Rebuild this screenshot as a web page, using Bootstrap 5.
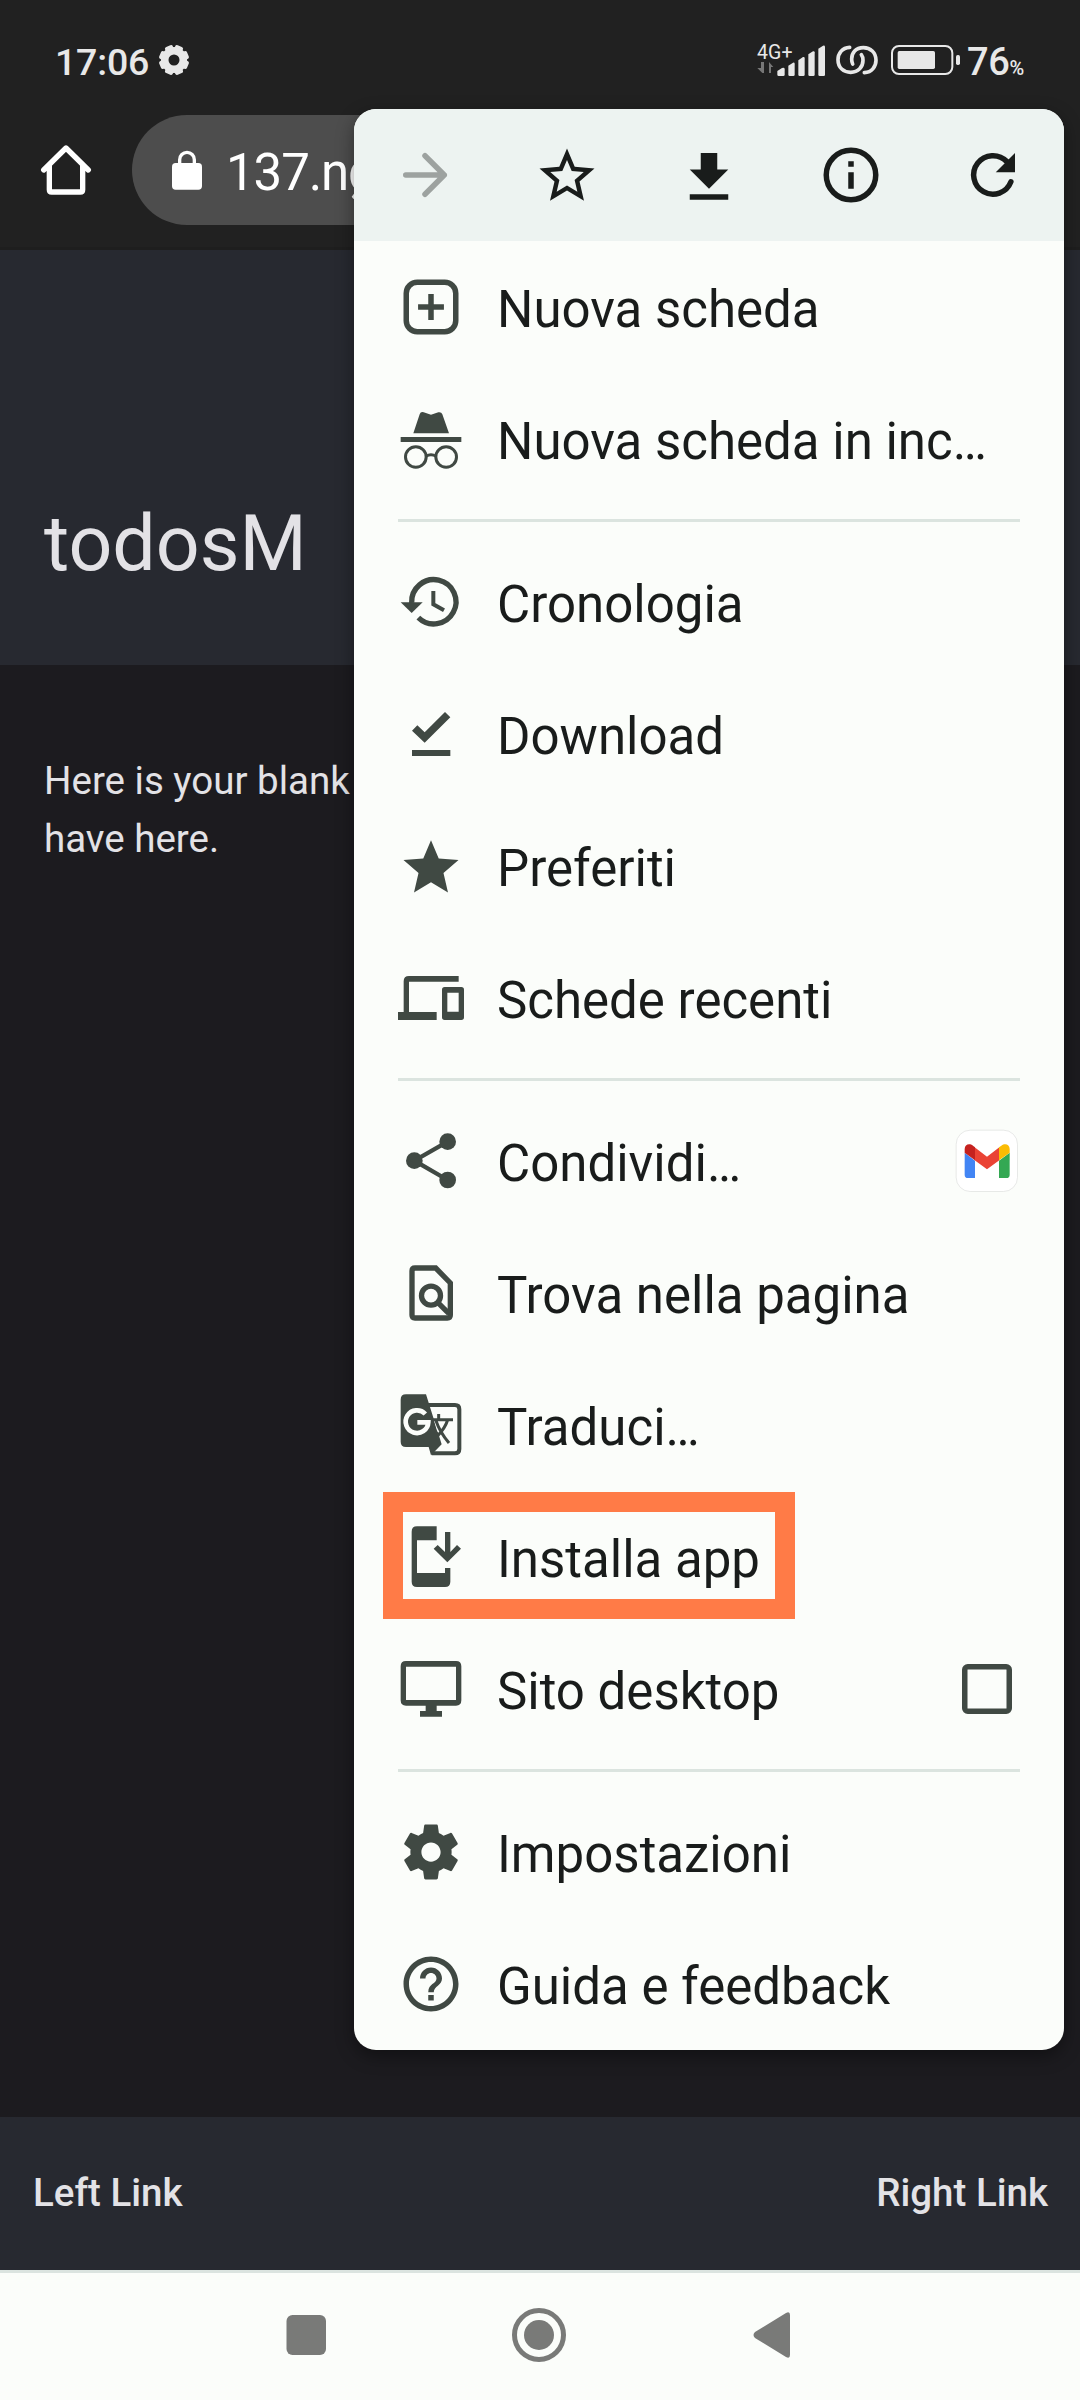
<!DOCTYPE html>
<html lang="it">
<head>
<meta charset="utf-8">
<meta name="viewport" content="width=device-width, initial-scale=1">
<title>todosM</title>
<link rel="stylesheet" href="https://cdn.jsdelivr.net/npm/bootstrap@5.3.0/dist/css/bootstrap.min.css">
<style>
body{font-family:Roboto,"Liberation Sans",sans-serif;background:#1c1b1f;color:#e3e2e6;width:1080px;height:2400px;overflow:hidden}
svg{display:block;flex:none}
.status-bar{height:109px;background:#212121;color:#e8e8e8;padding:0 56px 0 55px}
.clock{font-size:37.5px;font-weight:500;line-height:44px;letter-spacing:-.2px;margin-top:40px}
.status-gear{margin:45px 0 0 10px}
.net{width:37px;margin-top:43px}
.net-type{font-size:19.5px;line-height:19px;letter-spacing:.1px;white-space:nowrap}
.status-icons{margin:43px 0 0 -24px}
.pct{font-size:38px;font-weight:500;line-height:44px;margin:40px 0 0 7px;letter-spacing:-.3px}
.pct span{font-size:20px}
.url-bar{height:141px;background:#212121;border-bottom:3px solid #1e1e1e;padding:6px 0 0 33px}
.pill{height:110px;width:900px;border-radius:55px;background:#4d4d4d;margin-left:33px;padding-left:40px;color:#fff}
.url-text{font-size:51px;letter-spacing:-1.1px;margin-left:24px;line-height:60px;margin-top:6px}
.hero{height:415px;background:#272930;padding:248px 44px 0}
.hero h1{font-size:77px;line-height:92px;font-weight:400;margin:0}
.page-body{height:1452px;padding:87px 44px 0}
.page-body p{font-size:38.5px;line-height:58px;margin:0}
.page-foot{height:153px;background:#272930;padding:0 32px 2px 33px}
.page-foot a{color:#e3e2e6;font-size:38.5px;font-weight:500;text-decoration:none}
.sys-nav{height:130px;background:#fbfdfa;border-top:3px solid #dbe4e0}
.menu-sheet{left:354px;top:109px;width:710px;height:1941px;border-radius:22px;background:#fbfdfa;color:#191c1b;box-shadow:0 6px 18px rgba(0,0,0,.4)}
.menu-head{height:132px;background:#edf3f1;border-radius:22px 22px 0 0}
.menu-head div{width:142px}
.menu-row{height:132px;padding:0 44px}
.menu-row>svg{color:#404943}
.menu-label{font-size:51px;line-height:60px;margin:6px 0 0 33px;white-space:nowrap;flex:1 1 0}
.rule{height:3px;margin:14px 44px;background:#dbe4df}
.mark-box{left:29px;top:1px;width:412px;height:127px;border:20px solid #ff7b47}
</style>
<script src="https://cdn.jsdelivr.net/npm/bootstrap@5.3.0/dist/js/bootstrap.bundle.min.js"></script>
</head>
<body class="position-relative">
<header>
  <div class="status-bar d-flex justify-content-between align-items-start">
    <div class="d-flex align-items-start">
      <span class="clock">17:06</span>
      <svg class="status-gear" width="30" height="30" viewBox="-15 -15 30 30"><circle r="9.300" fill="none" stroke="#e8e8e8" stroke-width="7.600"/><g fill="#e8e8e8"><rect id="tooth" x="-4.200" y="-15" width="8.400" height="6" rx="2" transform="rotate(22.5)"/><use href="#tooth" transform="rotate(45)"/><use href="#tooth" transform="rotate(90)"/><use href="#tooth" transform="rotate(135)"/><use href="#tooth" transform="rotate(180)"/><use href="#tooth" transform="rotate(225)"/><use href="#tooth" transform="rotate(270)"/><use href="#tooth" transform="rotate(315)"/></g></svg>
    </div>
    <div class="d-flex align-items-start">
      <div class="net"><div class="net-type">4G+</div>
        <svg width="18" height="12" viewBox="114 192 54 36" fill="#777"><path d="M126 192h9v33h-5l-15-15h11zM142 225h8v-33l13 15h-7v18z"/></svg>
      </div>
      <svg class="status-icons" width="190" height="36" viewBox="150 129 570 108">
        <g fill="#e8e8e8"><path d="M172 213l14-9q8-2 8 3v17q0 4-4 4h-14q-4 0-4-4z"/><path d="M205 197l14-9q5-1 5 3v33q0 4-4 4h-11q-4 0-4-4z"/><path d="M235 181l14-10q5-1 5 3v50q0 4-4 4h-11q-4 0-4-4z"/><path d="M265 163l14-9q5-1 5 3v67q0 4-4 4h-11q-4 0-4-4z"/><path d="M295 146l14-9q6-1 6 3v84q0 4-4 4h-12q-4 0-4-4z"/></g>
        <g fill="none" stroke="#e8e8e8" stroke-width="11" stroke-linecap="round"><path d="M389 142c-23 1-35 19-35 37 0 24 17 38 38 38 23 0 37-16 37-36 0-8-2-13-5-17"/><path d="M433 218c23-1 35-19 35-37 0-24-17-38-38-38-23 0-35 16-35 34 0 7 1 11 3 15"/></g>
        <rect x="516" y="138" width="181" height="84" rx="21" fill="none" stroke="#e8e8e8" stroke-width="6"/><rect x="533" y="153" width="112" height="54" rx="5" fill="#e8e8e8"/><rect x="708" y="165" width="12" height="30" rx="5" fill="#e8e8e8"/>
      </svg>
      <span class="pct">76<span>%</span></span>
    </div>
  </div>
  <div class="url-bar d-flex">
    <svg width="66" height="110" viewBox="99 345 198 330" fill="none" stroke="#fff" stroke-width="16" stroke-linejoin="round" stroke-linecap="round"><path d="M131 510l67-66 67 66M148 497v72q0 7 7 7h86q7 0 7-7v-72"/></svg>
    <div class="pill d-flex align-items-center">
      <svg width="30" height="40" viewBox="516 448 90 120"><rect x="516" y="487" width="90" height="80" rx="11" fill="#fff"/><path d="M539 490v-13a22 22 0 0 1 44 0v13" fill="none" stroke="#fff" stroke-width="10"/></svg>
      <span class="url-text">137.ng</span>
    </div>
  </div>
</header>
<main>
  <section class="hero"><h1>todosM</h1></section>
  <section class="page-body"><p>Here is your blank<br>have here.</p></section>
</main>
<footer class="page-foot d-flex justify-content-between align-items-center"><a href="#">Left Link</a><a href="#">Right Link</a></footer>
<div class="sys-nav d-flex">
  <svg width="1080" height="124" viewBox="0 2273 1080 124" fill="#797a78"><rect x="286.500" y="2315" width="39.500" height="40" rx="6"/><circle cx="539" cy="2335" r="24.500" fill="none" stroke="#797a78" stroke-width="5"/><circle cx="539" cy="2335" r="15"/><path d="M755 2332L786 2313q4-2 4 2v40q0 4-4 2L755 2338q-3-3 0-6z"/></svg>
</div>

<nav class="menu-sheet position-absolute">
  <div class="menu-head d-flex align-items-center">
    <div class="d-flex justify-content-center"><svg width="66" height="66" viewBox="0 0 24 24" fill="none" stroke="#9da2a0" stroke-width="2" stroke-linecap="round" stroke-linejoin="round"><path d="M5 12h14M12 5l7 7-7 7"/></svg></div>
    <div class="d-flex justify-content-center"><svg width="66" height="66" viewBox="0 0 24 24" fill="currentColor"><path transform="translate(0 .4)" d="M22 9.240l-7.190-.620L12 2 9.190 8.630 2 9.240l5.460 4.730L5.820 21 12 17.270 18.180 21l-1.630-7.030L22 9.240zM12 15.400l-3.760 2.270 1-4.280-3.320-2.880 4.380-.380L12 6.100l1.710 4.040 4.380.380-3.320 2.880 1 4.280L12 15.400z"/></svg></div>
    <div class="d-flex justify-content-center"><svg width="66" height="66" viewBox="0 0 24 24" fill="currentColor"><path d="M19 10h-4V4H9v6H5l7 7zM5 19v2h14v-2z"/></svg></div>
    <div class="d-flex justify-content-center"><svg width="66" height="66" viewBox="0 0 24 24" fill="currentColor"><circle cx="12" cy="12" r="9" fill="none" stroke="currentColor" stroke-width="2"/><path d="M11 7h2v2h-2zM11 11h2v6h-2z"/></svg></div>
    <div class="d-flex justify-content-center"><svg width="66" height="66" viewBox="0 0 24 24"><path d="M18.500 14.500A7 7 0 1 1 17 7.100" fill="none" stroke="currentColor" stroke-width="2" stroke-linecap="round"/><path d="M20 4v7h-7z" fill="currentColor"/></svg></div>
  </div>

  <div class="menu-row d-flex align-items-center">
    <svg width="66" height="66" viewBox="0 0 24 24" fill="none" stroke="currentColor" stroke-width="2"><rect x="3" y="3" width="18" height="18" rx="4"/><path d="M12 7.300v9.400M7.300 12h9.400"/></svg>
    <span class="menu-label">Nuova scheda</span></div>
  <div class="menu-row d-flex align-items-center">
    <svg width="66" height="66" viewBox="144 138 198 198" fill="currentColor"><path d="M190 220l19-57q3-9 12-6l22 7 22-7q9-2 12 6l20 57zM152 231h182v15H152z"/><g fill="none" stroke="currentColor" stroke-width="9"><circle cx="197.500" cy="291" r="31"/><circle cx="288.500" cy="291" r="31"/><path d="M228 289q15-9 30 0"/></g></svg>
    <span class="menu-label">Nuova scheda in inc…</span></div>
  <div class="rule"></div>
  <div class="menu-row d-flex align-items-center">
    <svg width="66" height="66" viewBox="144 627 198 198"><path d="M152 727h66l-33 32z" fill="currentColor"/><g fill="none" stroke="currentColor"><path d="M185 729a66.500 66.500 0 1 1 20 44" stroke-width="16"/><path d="M250 693v40l32 18" stroke-width="12"/></g></svg>
    <span class="menu-label">Cronologia</span></div>
  <div class="menu-row d-flex align-items-center">
    <svg width="66" height="66" viewBox="144 123 198 198" fill="currentColor"><path d="M186 270h115v18H186zM186 212l16-16 22 21 61-61 16 16-77 76z"/></svg>
    <span class="menu-label">Download</span></div>
  <div class="menu-row d-flex align-items-center">
    <svg width="66" height="66" viewBox="0 0 24 24" fill="currentColor"><path transform="translate(0 .6)" d="M12 17.270L18.180 21l-1.640-7.030L22 9.240l-7.190-.610L12 2 9.190 8.630 2 9.240l5.460 4.730L5.820 21z"/></svg>
    <span class="menu-label">Preferiti</span></div>
  <div class="menu-row d-flex align-items-center">
    <svg width="66" height="66" viewBox="144 915 198 198" fill="currentColor"><path d="M144 1056h17v-92q0-16 16-16h149v17H177v91h83v24H144z"/><path fill-rule="evenodd" d="M284 981h50q8 0 8 8v83q0 8-8 8h-50q-8 0-8-8v-83q0-8 8-8zM292 998v57h34v-57z"/></svg>
    <span class="menu-label">Schede recenti</span></div>
  <div class="rule"></div>
  <div class="menu-row d-flex align-items-center">
    <svg width="66" height="66" viewBox="144 204 198 198" fill="currentColor"><circle cx="193" cy="302" r="25"/><circle cx="293" cy="245" r="25"/><circle cx="293" cy="360" r="25"/><path d="M293 245l-100 57 100 58" fill="none" stroke="currentColor" stroke-width="13"/></svg>
    <span class="menu-label">Condividi…</span>
    <svg width="66" height="66" viewBox="163 144 198 198"><rect x="169.500" y="150.500" width="184" height="184" rx="42" fill="#fff" stroke="#dcdedd" stroke-width="2"/><path fill="#4285f4" d="M195 218l31 24v52h-21q-10 0-10-10z"/><path fill="#34a853" d="M298 242l32-24v66q0 10-10 10h-22z"/><path fill="#ea4335" d="M225 202l37 28 37-28v39l-37 27-37-27z"/><path fill="#c5221f" d="M195 218v-11c0-14 14-19 25-10l6 5v39z"/><path fill="#fbbc04" d="M330 218v-11c0-14-14-19-25-10l-7 5v39z"/></svg></div>
  <div class="menu-row d-flex align-items-center">
    <svg width="66" height="66" viewBox="144 600 198 198" fill="none" stroke="currentColor" stroke-width="16"><path d="M195 624h62l44 45v96q0 9-9 9h-97q-9 0-9-9V633q0-9 9-9z"/><circle cx="243" cy="707" r="28.500"/><path d="M263 727l34 34"/></svg>
    <span class="menu-label">Trova nella pagina</span></div>
  <div class="menu-row d-flex align-items-center">
    <svg width="66" height="66" viewBox="144 996 198 198"><path d="M232 1035h83q13 0 13 13v119q0 13-13 13h-70" fill="none" stroke="currentColor" stroke-width="12"/><path d="M168 1003h60l47 150-32 33-7-25h-68q-16 0-16-16v-126q0-16 16-16z" fill="currentColor"/><path d="M252 1082h31q-8 23-21 33z" fill="#fbfdfa"/><path d="M247 1079h62M266 1062v17M293 1080q-8 25-30 47M258 1082q11 33 39 67" fill="none" stroke="currentColor" stroke-width="9"/><path d="M226 1062a34 34 0 1 0 9 25h-33" fill="none" stroke="#fbfdfa" stroke-width="14"/></svg>
    <span class="menu-label">Traduci…</span></div>
  <div class="menu-row d-flex align-items-center position-relative">
    <div class="mark-box position-absolute"></div>
    <svg width="66" height="66" viewBox="144 192 198 198" fill="currentColor"><path d="M201 199h59v42h-59v98h84v-15h16v41q0 16-16 16h-84q-16 0-16-16V215q0-16 16-16z"/><path d="M285 216h16v60l20-21 12 11-41 41-41-41 12-11 22 21z"/></svg>
    <span class="menu-label">Installa app</span></div>
  <div class="menu-row d-flex align-items-center">
    <svg width="66" height="66" viewBox="144 588 198 198" fill="currentColor"><path fill-rule="evenodd" d="M168 603h150q16 0 16 16v102q0 16-16 16h-58v16h16v17h-66v-17h17v-16h-59q-16 0-16-16V619q0-16 16-16zM168 620v100h150V620z"/></svg>
    <span class="menu-label">Sito desktop</span>
    <svg width="66" height="66" viewBox="0 0 66 66" fill="none" stroke="currentColor" stroke-width="5.500"><rect x="10.750" y="10.750" width="44.500" height="44.500" rx="3"/></svg></div>
  <div class="rule"></div>
  <div class="menu-row d-flex align-items-center">
    <svg width="66" height="66" viewBox="0 0 24 24" fill="currentColor"><path d="M19.430 12.980c.040-.320.070-.640.070-.980s-.030-.660-.070-.980l2.110-1.650c.190-.150.240-.420.120-.640l-2-3.460c-.120-.220-.390-.300-.610-.220l-2.490 1c-.520-.400-1.080-.730-1.690-.980l-.380-2.650C14.460 2.180 14.250 2 14 2h-4c-.250 0-.460.180-.490.420l-.380 2.650c-.610.250-1.170.590-1.690.980l-2.490-1c-.230-.090-.490 0-.610.220l-2 3.460c-.130.220-.070.490.120.640l2.110 1.650c-.040.320-.070.650-.070.980s.030.660.070.980l-2.110 1.650c-.190.150-.240.420-.120.640l2 3.460c.120.220.390.300.610.220l2.490-1c.520.400 1.080.730 1.690.980l.380 2.650c.030.240.240.420.490.420h4c.250 0 .460-.180.490-.420l.380-2.650c.610-.250 1.170-.590 1.690-.980l2.490 1c.230.090.490 0 .610-.220l2-3.460c.120-.220.070-.490-.120-.640l-2.110-1.650zM12 15.500c-1.930 0-3.500-1.570-3.500-3.500s1.570-3.500 3.500-3.500 3.500 1.570 3.500 3.500-1.570 3.500-3.500 3.500z"/></svg>
    <span class="menu-label">Impostazioni</span></div>
  <div class="menu-row d-flex align-items-center">
    <svg width="66" height="66" viewBox="0 0 24 24" fill="currentColor"><path d="M11 18h2v-2h-2v2zm1-16C6.480 2 2 6.480 2 12s4.480 10 10 10 10-4.480 10-10S17.520 2 12 2zm0 18c-4.410 0-8-3.590-8-8s3.590-8 8-8 8 3.590 8 8-3.590 8-8 8zm0-14c-2.210 0-4 1.790-4 4h2c0-1.100.900-2 2-2s2 .900 2 2c0 2-3 1.750-3 5h2c0-2.250 3-2.500 3-5 0-2.210-1.790-4-4-4z"/></svg>
    <span class="menu-label">Guida e feedback</span></div>
</nav>
</body>
</html>
